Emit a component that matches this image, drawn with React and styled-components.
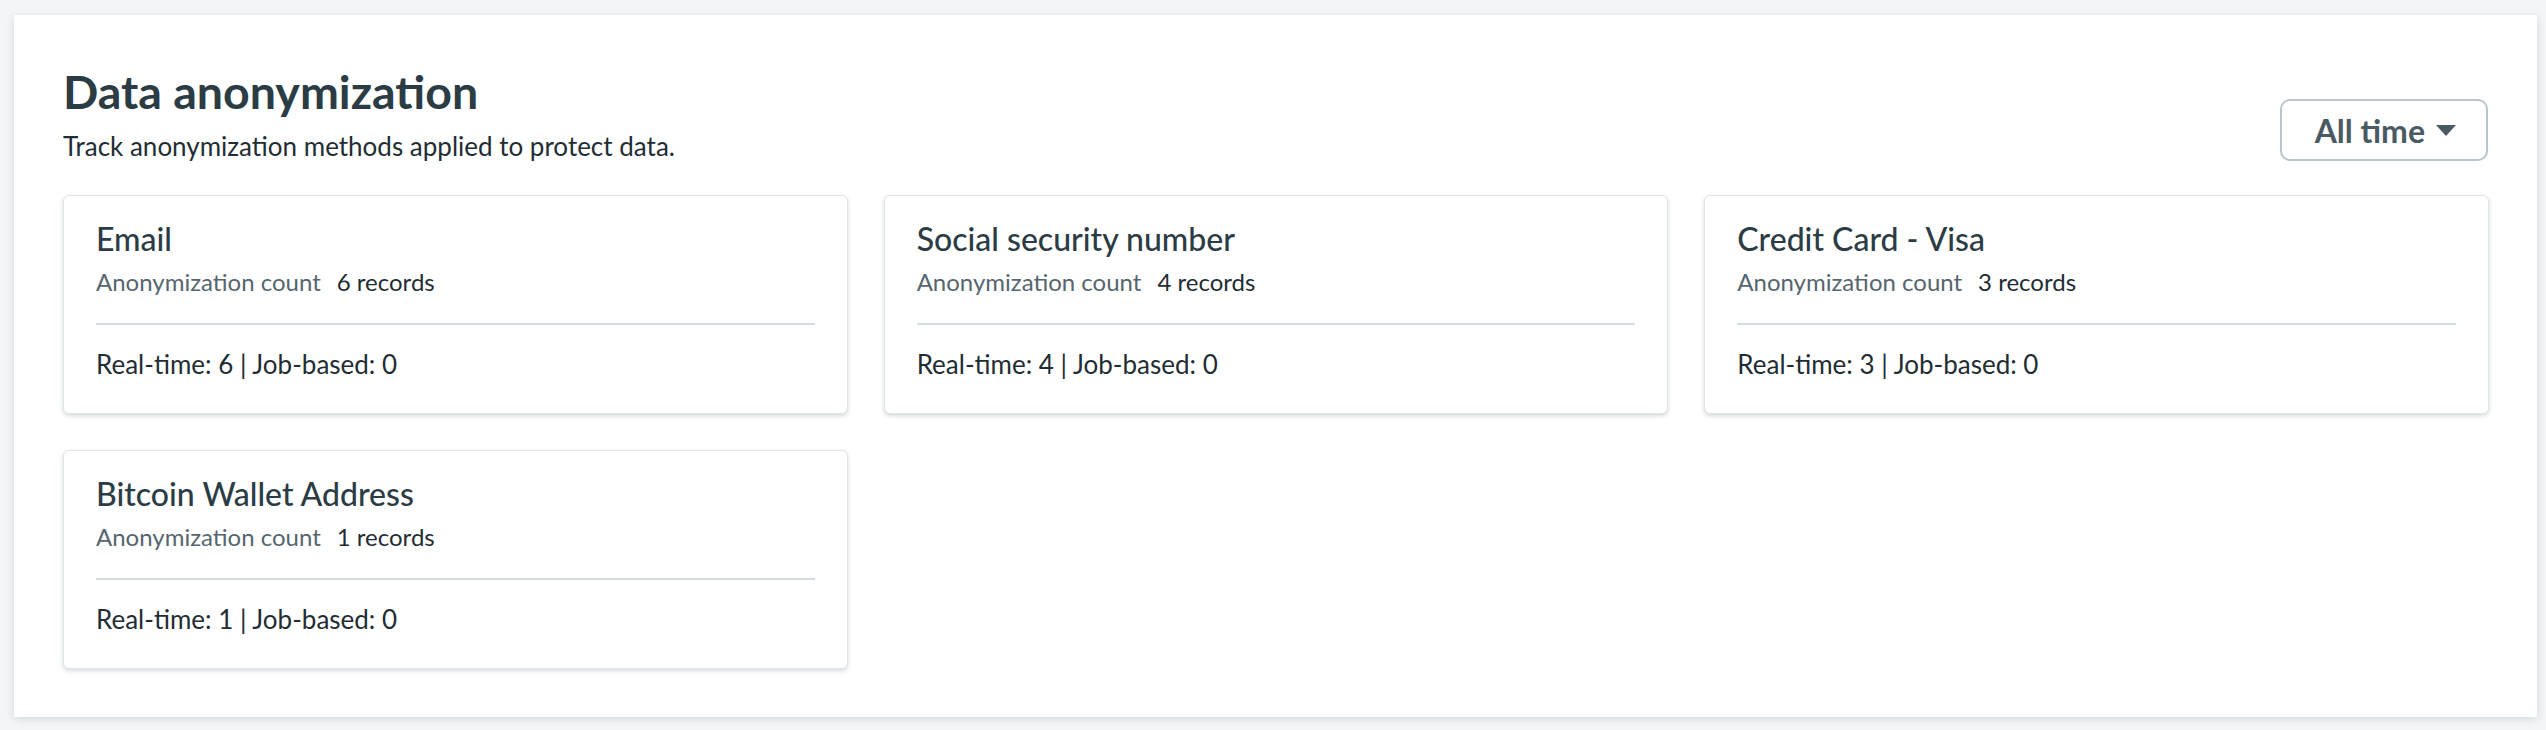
import React from "react";
import styled, { createGlobalStyle } from "styled-components";

const Global = createGlobalStyle`
  html, body { margin: 0; padding: 0; background: #f3f6f7; }
  body { font-family: Lato, "Open Sans", "Liberation Sans", sans-serif; }
  * { box-sizing: border-box; }
`;

const Page = styled.div`
  padding: 15px 9px 13px 14px;
  min-height: 730px;
`;

const Panel = styled.section`
  background: #ffffff;
  padding: 48px 48px 48px 49px;
  box-shadow: 0 2px 8px rgba(40, 60, 70, 0.16);
`;

const Header = styled.header`
  display: flex;
  justify-content: space-between;
  align-items: flex-end;
`;

const HeadText = styled.div`
  display: flex;
  flex-direction: column;
`;

const Title = styled.h1`
  margin: 0;
  font-size: 46.5px;
  line-height: 56px;
  font-weight: 700;
  color: #2b3c45;
`;

const Subtitle = styled.p`
  margin: 9px 0 0;
  font-size: 26px;
  line-height: 36px;
  color: #1f2d34;
`;

const RangeButton = styled.button`
  display: flex;
  align-items: center;
  gap: 11px;
  height: 62px;
  margin: 0 1px 3px 0;
  padding: 0 30px 0 33px;
  border: 2px solid #b8c6cd;
  border-radius: 10px;
  background: #fff;
  font-family: inherit;
  font-size: 32px;
  font-weight: 700;
  color: #4a5a62;
`;

const Caret = styled.span`
  width: 0;
  height: 0;
  border-left: 10px solid transparent;
  border-right: 10px solid transparent;
  border-top: 11px solid #4a5a62;
`;

const Grid = styled.div`
  display: grid;
  grid-template-columns: repeat(3, 1fr);
  gap: 36px;
  margin-top: 31px;
`;

const Card = styled.article`
  border: 1px solid #dfe5e8;
  border-radius: 6px;
  background: #fff;
  padding: 25px 32px 31px 32px;
  box-shadow: 0 2px 4px rgba(30, 45, 55, 0.18);
`;

const CardTitle = styled.h2`
  margin: 0;
  font-size: 32px;
  line-height: 36px;
  font-weight: 500;
  color: #2b3c45;
`;

const CountRow = styled.div`
  display: flex;
  gap: 16px;
  margin-top: 9px;
  font-size: 24px;
  line-height: 32px;
`;

const CountLabel = styled.span`
  color: #56666f;
`;

const CountValue = styled.span`
  color: #1f2d34;
`;

const Divider = styled.hr`
  margin: 25px 0 21px;
  border: 0;
  height: 2px;
  background: #d3dce0;
`;

const Breakdown = styled.div`
  font-size: 26px;
  line-height: 36px;
  color: #1f2d34;
`;

const items = [
  { name: "Email", count: 6, realtime: 6, job: 0 },
  { name: "Social security number", count: 4, realtime: 4, job: 0 },
  { name: "Credit Card - Visa", count: 3, realtime: 3, job: 0 },
  { name: "Bitcoin Wallet Address", count: 1, realtime: 1, job: 0 },
];

export default function App() {
  return (
    <>
      <Global />
      <Page>
        <Panel>
          <Header>
            <HeadText>
              <Title>Data anonymization</Title>
              <Subtitle>Track anonymization methods applied to protect data.</Subtitle>
            </HeadText>
            <RangeButton>
              All time <Caret />
            </RangeButton>
          </Header>
          <Grid>
            {items.map((it) => (
              <Card key={it.name}>
                <CardTitle>{it.name}</CardTitle>
                <CountRow>
                  <CountLabel>Anonymization count</CountLabel>
                  <CountValue>{it.count} records</CountValue>
                </CountRow>
                <Divider />
                <Breakdown>
                  Real-time: {it.realtime} | Job-based: {it.job}
                </Breakdown>
              </Card>
            ))}
          </Grid>
        </Panel>
      </Page>
    </>
  );
}
